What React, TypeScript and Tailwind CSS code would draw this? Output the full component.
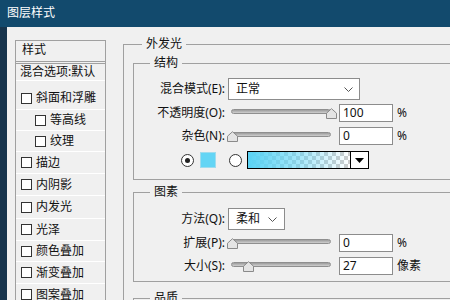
import React from "react";

// 图层样式 dialog — outer glow panel

const styleRows = [
  { label: "斜面和浮雕", sub: false, h: "h-[29px] pt-[6px]" },
  { label: "等高线", sub: true, h: "h-[21px]" },
  { label: "纹理", sub: true, h: "h-[21px]" },
  { label: "描边", sub: false, h: "h-[22px]" },
  { label: "内阴影", sub: false, h: "h-[22px]" },
  { label: "内发光", sub: false, h: "h-[23px]" },
  { label: "光泽", sub: false, h: "h-[22px]" },
  { label: "颜色叠加", sub: false, h: "h-[21px]" },
  { label: "渐变叠加", sub: false, h: "h-[22px]" },
  { label: "图案叠加", sub: false, h: "h-[22px]" },
];

const Checkbox = () => (
  <span className="w-[11px] h-[11px] shrink-0 border border-[#333333] bg-white" />
);

const Chevron = () => (
  <svg width="9" height="5" viewBox="0 0 9 5" className="shrink-0">
    <polyline points="0.5,0.5 4.5,4.5 8.5,0.5" fill="none" stroke="#555555" strokeWidth="1" />
  </svg>
);

const Thumb = () => (
  <svg width="11" height="11" viewBox="0 0 11 11">
    <path d="M0.5 10.5 V5.2 L5.5 0.7 L10.5 5.2 V10.5 Z" fill="#e4e4e4" stroke="#8a8a8a" />
  </svg>
);

const Slider = ({ pos }: { pos: number }) => (
  <div className="relative w-[110px] h-[18px] ml-[2px] shrink-0">
    <div className="absolute left-[4px] top-[5px] w-[100px] h-[5px] rounded-[3px] border border-[#8f8f8f] bg-gradient-to-b from-[#9c9c9c] to-[#cfcfcf]" />
    <div className="absolute top-[4px]" style={{ left: pos }}>
      <Thumb />
    </div>
  </div>
);

const Field = ({ value }: { value: string }) => (
  <div className="w-[54px] h-[18px] ml-[2px] shrink-0 border border-[#8c8c8c] bg-white pl-[3px] flex items-center text-[12px] leading-[16px]">
    {value}
  </div>
);

const Label = ({ children }: { children: React.ReactNode }) => (
  <span className="w-[91px] shrink-0 text-right whitespace-nowrap">{children}</span>
);

const Legend = ({ title, ml }: { title: string; ml: string }) => (
  <legend className={`${ml} px-[4px] leading-[16px] text-[12px]`}>{title}</legend>
);

const SliderRow = ({ label, pos, value, unit, mt }: { label: string; pos: number; value: string; unit: string; mt: string }) => (
  <div className={`flex items-center h-[18px] ${mt}`}>
    <Label>{label}</Label>
    <Slider pos={pos} />
    <Field value={value} />
    <span className="ml-[4px]">{unit}</span>
  </div>
);

export default function App() {
  return (
    <div className="w-[450px] h-[300px] overflow-hidden bg-[#f0f0f0] text-[12px] leading-[16px] text-[#111111] font-['Noto_Sans','Noto_Sans_CJK_SC',sans-serif]">
      {/* title bar */}
      <div className="h-[27px] bg-[#124a6d] text-white flex items-center pl-[7px] pb-[2px] text-[12px]">
        图层样式
      </div>

      <div className="flex h-[273px]">
        <div className="w-[7px] shrink-0 bg-[#17344c]" />

        {/* styles list */}
        <div className="w-[91px] ml-[8px] mt-[13px] shrink-0 self-start border border-[#a0a0a0]">
          <div className="h-[23px] pl-[6px] pb-[3px] flex items-center border-b-[3px] border-double border-[#a0a0a0]">
            样式
          </div>
          <div className="h-[17px] pl-[4px] flex items-center border-b border-white whitespace-nowrap">
            混合选项:默认
          </div>
          {styleRows.map((r) => (
            <div
              key={r.label}
              className={`${r.h} flex items-center gap-[4px] border-b border-white whitespace-nowrap ${r.sub ? "pl-[19px]" : "pl-[5px]"}`}
            >
              <Checkbox />
              <span>{r.label}</span>
            </div>
          ))}
        </div>

        {/* settings */}
        <div className="ml-[17px] mt-[9px] flex-1 min-w-[340px]">
          <fieldset className="border-0 border-t border-l border-b border-[#a0a0a0] pl-[9px] min-w-0">
            <Legend title="外发光" ml="ml-[9px]" />

            <fieldset className="mt-[3px] border-0 border-t border-l border-b border-[#a0a0a0] pt-[7px] pb-[10px] min-w-0">
              <Legend title="结构" ml="ml-[16px]" />
              <div className="flex items-center h-[22px]">
                <Label>混合模式(E):</Label>
                <div className="ml-[3px] w-[132px] h-[22px] shrink-0 border border-[#8c8c8c] bg-white flex items-center justify-between pl-[7px] pr-[6px]">
                  <span>正常</span>
                  <Chevron />
                </div>
              </div>
              <SliderRow label="不透明度(O):" pos={99} value="100" unit="%" mt="mt-[4px]" />
              <SliderRow label="杂色(N):" pos={0} value="0" unit="%" mt="mt-[5px]" />
              <div className="flex items-center h-[18px] mt-[6px] pl-[47px]">
                <span className="w-[13px] h-[13px] rounded-full border border-[#333333] bg-white flex items-center justify-center shrink-0">
                  <span className="w-[5px] h-[5px] rounded-full bg-[#222222]" />
                </span>
                <span className="ml-[6px] w-[16px] h-[16px] bg-[#63d5f5] border border-[#9fdcee] shrink-0" />
                <span className="ml-[13px] w-[13px] h-[13px] rounded-full border border-[#333333] bg-white shrink-0" />
                <div className="ml-[5px] w-[122px] h-[18px] shrink-0 border border-black flex">
                  <div className="flex-1 bg-[image:repeating-conic-gradient(#cdcdcd_0_25%,#ffffff_0_50%)] bg-[length:8px_8px]">
                    <div className="w-full h-full bg-gradient-to-r from-[#5ad3f5] via-[#5ad3f5]/55 to-transparent" />
                  </div>
                  <div className="w-[18px] border-l border-black bg-white flex items-center justify-center">
                    <svg width="9" height="5" viewBox="0 0 9 5">
                      <polygon points="0,0 9,0 4.5,5" fill="#000000" />
                    </svg>
                  </div>
                </div>
              </div>
            </fieldset>

            <fieldset className="mt-[4px] border-0 border-t border-l border-b border-[#a0a0a0] pt-[8px] pb-[6px] min-w-0">
              <Legend title="图素" ml="ml-[16px]" />
              <div className="flex items-center h-[22px]">
                <Label>方法(Q):</Label>
                <div className="ml-[3px] w-[57px] h-[22px] shrink-0 border border-[#8c8c8c] bg-white flex items-center justify-between pl-[7px] pr-[7px]">
                  <span>柔和</span>
                  <Chevron />
                </div>
              </div>
              <SliderRow label="扩展(P):" pos={0} value="0" unit="%" mt="mt-[4px]" />
              <SliderRow label="大小(S):" pos={16} value="27" unit="像素" mt="mt-[5px]" />
            </fieldset>

            <fieldset className="mt-[8px] border-0 border-t border-l border-[#a0a0a0] h-[40px] min-w-0">
              <Legend title="品质" ml="ml-[16px]" />
            </fieldset>
          </fieldset>
        </div>
      </div>
    </div>
  );
}
